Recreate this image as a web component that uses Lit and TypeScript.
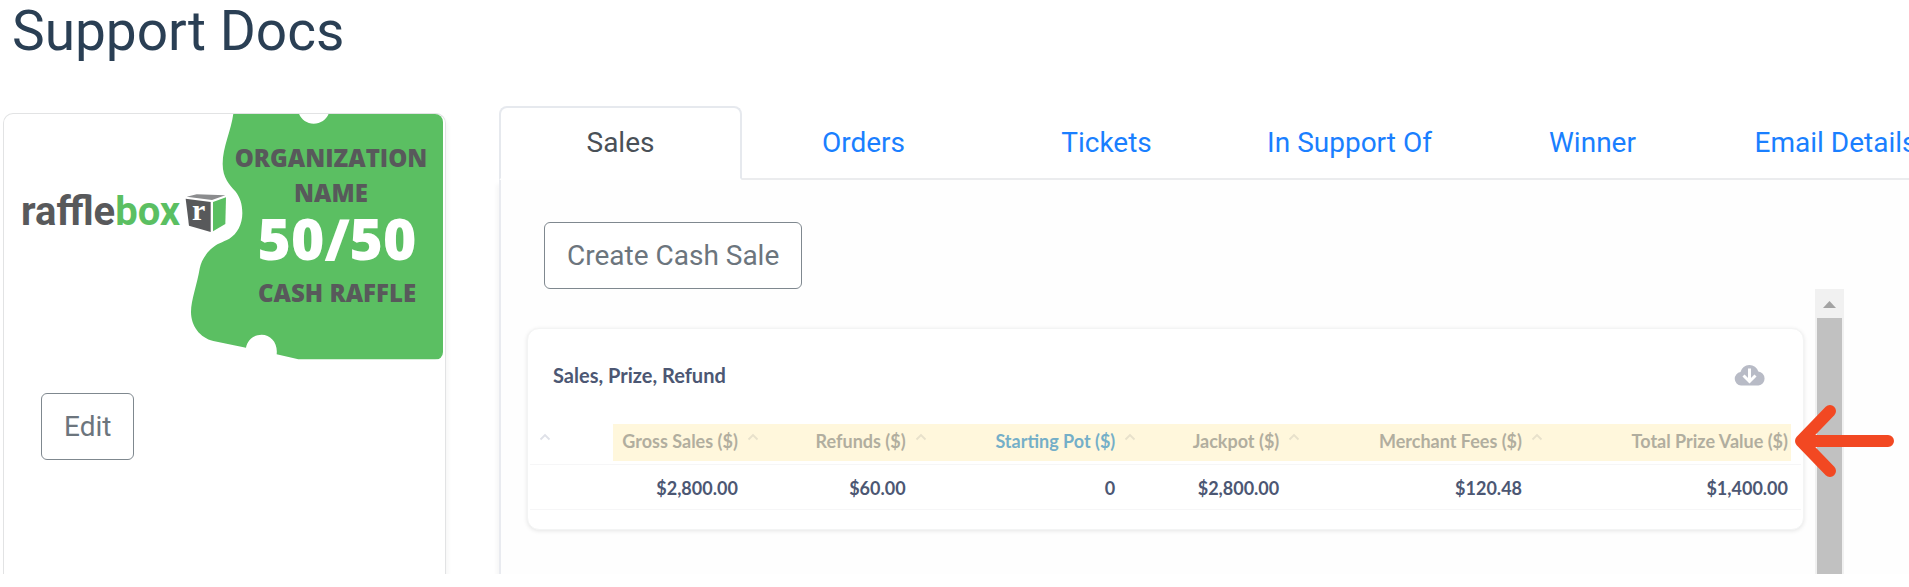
import { LitElement, html, css, svg } from "lit";
import { customElement, property } from "lit/decorators.js";
import { classMap } from "lit/directives/class-map.js";

interface Column {
  key: string;
  label: string;
  value: string;
  linked?: boolean;
}

const TABS = ["Sales", "Orders", "Tickets", "In Support Of", "Winner", "Email Details"];

const COLUMNS: Column[] = [
  { key: "gross", label: "Gross Sales ($)", value: "$2,800.00" },
  { key: "refunds", label: "Refunds ($)", value: "$60.00" },
  { key: "pot", label: "Starting Pot ($)", value: "0", linked: true },
  { key: "jackpot", label: "Jackpot ($)", value: "$2,800.00" },
  { key: "fees", label: "Merchant Fees ($)", value: "$120.48" },
  { key: "total", label: "Total Prize Value ($)", value: "$1,400.00" },
];

const caret = html`<svg class="caret" viewBox="0 0 12 8" aria-hidden="true">
  <path d="M1.5 6.5 6 2l4.500 4.500" fill="none" stroke="#dfe1e8" stroke-width="1.800" />
</svg>`;

/** Raffle artwork: logo on the left, torn ticket on the right. */
@customElement("raffle-banner")
export class RaffleBanner extends LitElement {
  static styles = css`
    :host {
      display: block;
    }
    .art {
      display: block;
      width: 100%;
      border-radius: 8px;
    }
    .label {
      font: 800 24px "Open Sans", sans-serif;
      fill: #58595b;
      text-anchor: middle;
    }
    .amount {
      font: 800 57px "Open Sans", sans-serif;
      fill: #fff;
      text-anchor: middle;
    }
    .word {
      font: 700 40px Roboto, sans-serif;
      fill: #58595b;
    }
    .green {
      fill: #5bbf62;
    }
    .mark {
      font: 700 30px "Liberation Serif", serif;
      fill: #fff;
    }
  `;

  render() {
    return html`<svg class="art" viewBox="0 0 439 246" role="img" aria-label="Rafflebox 50/50 cash raffle">
      ${svg`
        <g transform="translate(-4 -114) scale(.33333)">
          <path class="green" d="M700 341C694 390 668 440 668 492C668 535 690 555 706 574C720 592 727 612 727 640
            C727 672 712 702 688 716C668 727 650 730 632 748C612 768 603 786 599 806C592 850 573 900 573 935
            C573 978 600 1013 640 1023L738 1043C742 1020 762 1004 785 1004C812 1004 834 1028 830 1063L895 1078H1330V341H986
            C980 358 962 371 941 371C921 371 903 358 897 341Z" />
          <path d="M557 596L632 606L632 696L567 677Z" fill="#58595b" />
          <path class="green" d="M639 606L678 592L676 672L639 694Z" />
          <path d="M560 590L590 583L676 586L636 600Z" fill="#8b8c8e" />
        </g>
        <text class="word" x="17" y="111">raffle<tspan class="green">box</tspan></text>
        <text class="mark" x="188" y="106">r</text>
        <text class="label" x="327" y="53">ORGANIZATION</text>
        <text class="label" x="327" y="88">NAME</text>
        <text class="amount" x="333" y="146">50/50</text>
        <text class="label" x="333" y="188">CASH RAFFLE</text>
      `}
    </svg>`;
  }
}

/** Summary card with the sales figures. */
@customElement("sales-card")
export class SalesCard extends LitElement {
  static styles = css`
    :host {
      display: block;
      font-family: Lato, sans-serif;
      color: #4c5773;
    }
    .card {
      box-sizing: border-box;
      padding: 0 2px 19px;
      border: 1px solid #f3f4f4;
      border-radius: 12px;
      background: #fff;
      box-shadow: 0 1px 4px rgba(0, 0, 0, 0.1);
    }
    .head {
      display: flex;
      justify-content: space-between;
      align-items: center;
      height: 24px;
      padding: 34px 36px 29px 23px;
    }
    .title {
      margin: 0;
      font-size: 20px;
      line-height: 24px;
      font-weight: 700;
    }
    .download {
      display: block;
      padding: 0;
      border: 0;
      background: none;
    }
    .cloud {
      display: block;
      width: 31px;
      height: 22px;
    }
    .grid {
      position: relative;
    }
    .figures {
      width: 100%;
      table-layout: fixed;
      border-collapse: separate;
      border-spacing: 0;
      font-size: 18px;
      line-height: 24px;
    }
    th,
    td {
      box-sizing: border-box;
      padding: 2px 26px 0 0;
      border-bottom: 1px solid #f6f6f7;
      text-align: right;
      font-weight: 700;
      white-space: nowrap;
    }
    th {
      height: 49px;
      color: #949aab;
    }
    td {
      height: 45px;
    }
    .total {
      padding-right: 13px;
    }
    .linked {
      color: #3f9be4;
    }
    .anchor {
      display: inline-block;
      position: relative;
      height: 24px;
      vertical-align: top;
    }
    .caret {
      position: absolute;
      left: 100%;
      top: 4px;
      width: 12px;
      height: 8px;
      margin-left: 9px;
    }
    .col-lead { width: 2%; }
    .col-gross { width: 16.4%; }
    .col-refunds { width: 13.2%; }
    .col-pot { width: 16.5%; }
    .col-jackpot { width: 12.9%; }
    .col-fees { width: 19.1%; }
    .highlight {
      position: absolute;
      top: 8px;
      left: 83px;
      right: 10px;
      height: 37px;
      background: rgba(255, 226, 130, 0.28);
      pointer-events: none;
    }
  `;

  render() {
    return html`<section class="card">
      <div class="head">
        <h2 class="title">Sales, Prize, Refund</h2>
        <button class="download" aria-label="Download results">
          <svg class="cloud" viewBox="0 0 31 22" aria-hidden="true">
            <path d="M7 21.500A6.800 6.800 0 0 1 6.500 8A9.200 9.200 0 0 1 24.300 7.600A7 7 0 0 1 24.500 21.500Z" fill="#b8bbc6" />
            <path d="M15.500 4.500V17M9.500 11.500L15.500 17.500L21.500 11.500" fill="none" stroke="#fff" stroke-width="3" />
          </svg>
        </button>
      </div>
      <div class="grid">
        <table class="figures">
          <colgroup>
            <col class="col-lead" />
            ${COLUMNS.map((c) => html`<col class="col-${c.key}" />`)}
          </colgroup>
          <thead>
            <tr>
              <th><span class="anchor">${caret}</span></th>
              ${COLUMNS.map(
                (c) => html`<th scope="col" class=${classMap({ linked: !!c.linked, total: c.key === "total" })}>
                  <span class="anchor">${c.label}${c.key === "total" ? "" : caret}</span>
                </th>`
              )}
            </tr>
          </thead>
          <tbody>
            <tr>
              <td></td>
              ${COLUMNS.map((c) => html`<td class=${classMap({ total: c.key === "total" })}>${c.value}</td>`)}
            </tr>
          </tbody>
        </table>
        <div class="highlight"></div>
      </div>
    </section>`;
  }
}

@customElement("app-root")
export class AppRoot extends LitElement {
  @property() active = "Sales";

  static styles = css`
    :host {
      display: flex;
      flex-direction: column;
      box-sizing: border-box;
      min-height: 100vh;
      padding-bottom: 13px;
      overflow: hidden;
      background: #fff;
      font-family: Roboto, sans-serif;
      font-size: 28px;
      line-height: 42px;
    }
    .heading {
      margin: 0 0 44px;
      padding-left: 12px;
      font-size: 55px;
      line-height: 62px;
      font-weight: 400;
      color: #2a3f54;
    }
    .layout {
      flex: 1;
      display: grid;
      grid-template-columns: 443px minmax(0, 1fr);
      column-gap: 53px;
      padding-left: 3px;
    }
    .raffle {
      margin-top: 7px;
      border: 1px solid #e2e3e4;
      border-bottom: 0;
      border-radius: 10px 10px 0 0;
      box-shadow: 2px 4px 4px rgba(0, 0, 0, 0.04);
      clip-path: inset(0 -6px 0 0);
    }
    .banner {
      margin-right: 2px;
    }
    .btn {
      padding: 0 22px;
      border: 1px solid #7f888f;
      border-radius: 6px;
      background: #fff;
      font: inherit;
      line-height: 65px;
      color: #6c757d;
    }
    .edit {
      margin: 33px 0 0 37px;
    }
    .detail {
      display: flex;
      flex-direction: column;
      min-width: 0;
    }
    .tabs {
      display: flex;
      overflow: hidden;
      box-shadow: inset 0 -2px #ebecee;
    }
    .tab {
      box-sizing: border-box;
      flex: 0 0 243px;
      height: 74px;
      padding: 14px 0;
      border: 2px solid transparent;
      text-align: center;
      text-decoration: none;
      white-space: nowrap;
      color: #1a7fff;
    }
    .current {
      border-color: #e6e9ee;
      border-bottom-color: #fff;
      border-radius: 8px 8px 0 0;
      background: #fff;
      color: #495057;
    }
    .panel {
      flex: 1;
      display: flex;
      flex-direction: column;
      align-items: flex-start;
      padding: 42px 65px 0 26px;
      border-left: 2px solid #e9ebf0;
      background: #fefefe;
      box-shadow: -3px 4px 4px rgba(0, 0, 0, 0.03);
      clip-path: inset(0 0 0 -8px);
    }
    .create {
      margin-left: 17px;
    }
    .scroller {
      flex: 1;
      align-self: stretch;
      display: grid;
      grid-template-columns: minmax(0, 1fr) 29px;
      column-gap: 11px;
    }
    .sales {
      margin-top: 39px;
    }
    .track {
      position: relative;
      display: flex;
      flex-direction: column;
      background: #f1f1f1;
    }
    .up {
      display: block;
      width: 29px;
      height: 29px;
    }
    .thumb {
      flex: 1;
      margin: 0 2px;
      background: #c1c1c1;
    }
    .pointer {
      position: absolute;
      top: 115px;
      left: -20px;
      width: 100px;
      height: 74px;
    }
  `;

  private select(event: Event, tab: string) {
    event.preventDefault();
    this.active = tab;
  }

  render() {
    return html`
      <h1 class="heading">Support Docs</h1>
      <main class="layout">
        <aside class="raffle">
          <raffle-banner class="banner"></raffle-banner>
          <button class="btn edit">Edit</button>
        </aside>
        <section class="detail">
          <nav class="tabs">
            ${TABS.map(
              (tab) => html`<a
                href="#"
                class=${classMap({ tab: true, current: tab === this.active })}
                @click=${(e: Event) => this.select(e, tab)}
                >${tab}</a
              >`
            )}
          </nav>
          <div class="panel">
            <button class="btn create">Create Cash Sale</button>
            <div class="scroller">
              <sales-card class="sales"></sales-card>
              <div class="track">
                <svg class="up" viewBox="0 0 29 29" aria-hidden="true">
                  <path d="M8 19L14.500 12L21 19Z" fill="#a3a3a3" />
                </svg>
                <div class="thumb"></div>
                <svg class="pointer" viewBox="0 0 100 74" aria-hidden="true">
                  <path
                    d="M35 7L6 37L35 67M8 37H93"
                    fill="none"
                    stroke="#f24822"
                    stroke-width="12"
                    stroke-linecap="round"
                    stroke-linejoin="round"
                  />
                </svg>
              </div>
            </div>
          </div>
        </section>
      </main>
    `;
  }
}
